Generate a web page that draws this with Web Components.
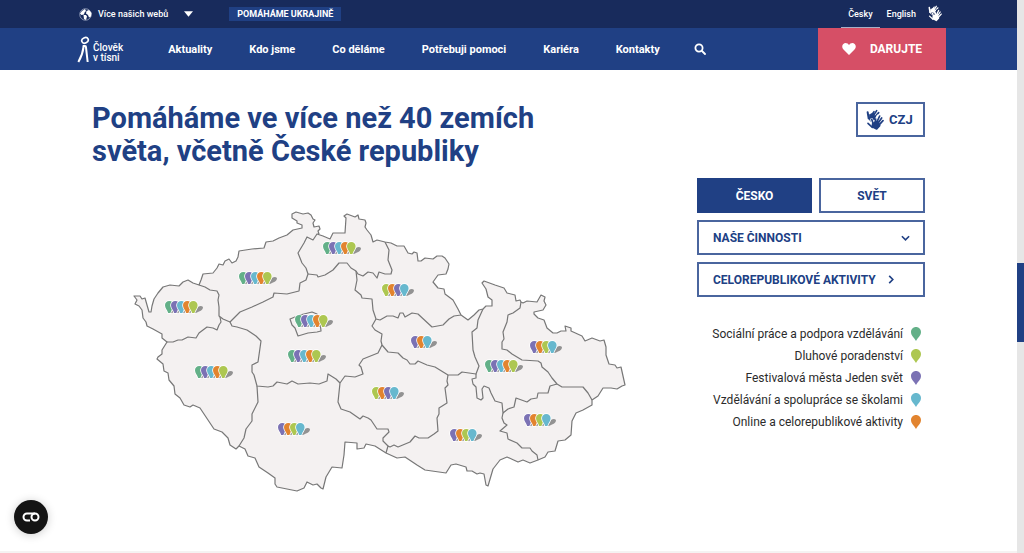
<!DOCTYPE html>
<html lang="cs">
<head>
<meta charset="utf-8">
<title>Člověk v tísni</title>
<style>
:root{--navy:#182b5c;--blue:#204084;--red:#d64f66;--green:#63b088;--lime:#adc751;--violet:#7b72b4;--sky:#67b8ce;--orange:#e2842f}
*{box-sizing:border-box}
body{margin:0;background:#fff;color:#2b2b2b;font-family:Roboto,"Liberation Sans",sans-serif;font-size:12px}
</style>
</head>
<body>
<site-page>
  <top-bar slot="header"></top-bar>
  <main-nav slot="header"></main-nav>
  <help-section></help-section>
  <consent-button slot="overlay"></consent-button>
</site-page>

<script>
const define = (name, html, setup) => {
  const template = document.createElement('template');
  template.innerHTML = '<style>*{box-sizing:border-box}button,select{font:inherit;border:0;margin:0;padding:0;background:none;color:inherit;cursor:pointer}a{color:inherit;text-decoration:none}svg{display:block}</style>' + html;
  customElements.define(name, class extends HTMLElement {
    constructor() {
      super();
      this.attachShadow({ mode: 'open' }).append(template.content.cloneNode(true));
    }
    connectedCallback() { if (setup) setup(this, this.shadowRoot); }
  });
};

const PIN = 'M5 0C2.200 0 0 2.200 0 5C0 8.500 3 10.500 5 14C7 10.500 10 8.500 10 5C10 2.200 7.800 0 5 0Z';

define('site-page', `
<style>
:host{display:grid;grid-template-columns:1fr 7px;min-height:100vh}
.content{display:flex;flex-direction:column;border-bottom:2px solid #f5f2f2}
.rail{background:#e6e6e6;position:relative}
.thumb{position:absolute;top:263px;left:0;right:0;height:79px;background:var(--blue)}
</style>
<div class="content"><header><slot name="header"></slot></header><main><slot></slot></main></div>
<div class="rail"><div class="thumb"></div></div>
<slot name="overlay"></slot>`);

define('hands-icon', `
<style>:host{display:block;width:18px;color:inherit}svg{width:100%}</style>
<svg viewBox="0 0 54 66" fill="none" stroke="currentColor" stroke-linecap="round" stroke-linejoin="round" aria-hidden="true">
<path d="M11 17 23 12 27 30 16 38 8 30Z" fill="currentColor" stroke-width="3"/>
<path d="M5 10 8 28" stroke-width="6"/><path d="M14 22 24 8" stroke-width="5"/><path d="M19 25 32 5" stroke-width="5"/><path d="M23 28 38 11" stroke-width="5"/>
<g stroke="var(--hand-gap,#fff)"><path d="M20 44 35 35 43 50 31 60 18 54Z" fill="var(--hand-gap,#fff)" stroke-width="9"/><path d="M24 45 17 32" stroke-width="9"/><path d="M29 42 36 21" stroke-width="9"/></g>
<path d="M20 44 35 36 41 50 32 60 19 53Z" fill="currentColor" stroke-width="5"/>
<path d="M22 45 17 31" stroke-width="5"/><path d="M27 42 29 30" stroke-width="5"/><path d="M32 40 41 21" stroke-width="5"/><path d="M36 43 47 27" stroke-width="5"/><path d="M38 49 51 35" stroke-width="5"/>
<path d="M6 43 19 55" stroke-width="5"/>
</svg>`);

define('top-bar', `
<style>
:host{display:flex;align-items:center;height:28px;padding:0 75px 0 79px;background:var(--navy);color:#fff;font-size:9px;font-weight:500}
.webs{display:flex;align-items:center;gap:6px}
.webs .arrow{margin-left:10px}
.ukraine{margin-left:36px;padding:0 8px;height:14px;line-height:14px;background:var(--blue);font-weight:700}
nav{display:flex;margin-left:auto;align-items:center}
nav a{line-height:28px;padding:0 7px}
nav a.on{box-shadow:inset 0 -1px #a7afc6}
nav a.sign{padding:0 0 0 5px}
hands-icon{width:14px}
</style>
<button class="webs"><svg width="13" height="13" viewBox="0 0 26 26" aria-hidden="true"><circle cx="13" cy="13" r="11.500" fill="none" stroke="#aeb7cf" stroke-width="1.500"/><path d="M6 6 12 2 14 6 11 9 10 13 5 14 2 11ZM9 14 14 14 16 17 14 24 10 22ZM15 6 20 4 25 10 24 17 20 19 18 14 14 11Z" fill="#fff"/></svg><span>Více našich webů</span><svg class="arrow" width="9" height="6" viewBox="0 0 10 6" aria-hidden="true"><path d="M0 0H10L5 6Z" fill="#fff"/></svg></button>
<a class="ukraine" href="#ukrajina">POMÁHÁME UKRAJINĚ</a>
<nav aria-label="Jazyk"><a class="on" href="#cs">Česky</a><a href="#en">English</a><a class="sign" href="#czj" aria-label="Znakový jazyk"><hands-icon style="--hand-gap:var(--navy)"></hands-icon></a></nav>`);

define('main-nav', `
<style>
:host{display:flex;align-items:center;height:42px;padding:0 71px 0 77px;background:var(--blue);color:#fff;font-size:11px;font-weight:700}
.logo{display:flex;align-items:flex-end;gap:3px;line-height:10px;font-size:10px;font-weight:500;white-space:nowrap}
nav{display:flex;align-items:center;gap:37px;margin-left:45px;white-space:nowrap}
.search{margin-left:34px}
.donate{display:flex;align-items:center;justify-content:center;gap:14px;width:128px;height:42px;margin-left:auto;background:var(--red);font-size:12px}
</style>
<a class="logo" href="#home"><svg width="13" height="27" viewBox="0 0 39 81" fill="none" stroke="#fff" aria-hidden="true"><ellipse cx="24" cy="13" rx="10" ry="8" stroke-width="5" transform="rotate(-25 24 13)"/><path d="M17 30H24Q27 30 27 34L32 78" stroke-width="6"/><path d="M20 31Q17 56 4 78" stroke-width="6"/></svg><span>Člověk<br>v tísni</span></a>
<nav aria-label="Hlavní"><a href="#a">Aktuality</a><a href="#k">Kdo jsme</a><a href="#c">Co děláme</a><a href="#p">Potřebuji pomoci</a><a href="#j">Kariéra</a><a href="#ko">Kontakty</a></nav>
<button class="search" aria-label="Hledat"><svg width="12" height="12" viewBox="0 0 12 12" fill="none" stroke="#fff" stroke-width="1.800" stroke-linecap="round"><circle cx="5" cy="5" r="3.600"/><path d="M8 8 11 11"/></svg></button>
<a class="donate" href="#darujte"><svg width="14" height="12" viewBox="0 0 28 24" aria-hidden="true"><path d="M14 24 3 13C-3 6 3 0 7 0Q12 0 14 4Q16 0 21 0C25 0 31 6 25 13Z" fill="#fff"/></svg><span>DARUJTE</span></a>`);

define('help-section', `
<style>
:host{display:grid;grid-template-columns:minmax(0,1fr) 228px;padding:32px 92px 0}
h1{margin:0;color:var(--blue);font-size:29px;line-height:33px;font-weight:700}
region-map{margin:40px 0 0 38px;max-width:500px}
.side{display:flex;flex-direction:column}
</style>
<div><h1>Pomáháme ve více než 40 zemích<br>světa, včetně České republiky</h1><region-map></region-map></div>
<div class="side"><map-filter></map-filter><map-legend></map-legend></div>`);

define('map-filter', `
<style>
:host{display:grid;gap:7px;color:var(--blue);font-size:12px;font-weight:700}
.box,select{display:flex;align-items:center;height:35px;width:100%;border:2px solid #4a659e;padding:0 14px;font-weight:700;color:var(--blue);appearance:none}
.box.czj{justify-self:end;width:69px;padding:0 8px;gap:5px;margin-bottom:34px;font-size:13px}
.tabs{display:grid;grid-template-columns:115fr 106fr;gap:7px}
.tabs .box{justify-content:center}
.tabs .on{background:var(--blue);color:#fff;border-color:var(--blue)}
.drop{display:grid;align-items:center}
.drop>*{grid-area:1/1}
.drop svg{justify-self:end;margin-right:15px;pointer-events:none}
.link{gap:12px;white-space:nowrap}
</style>
<button class="box czj"><hands-icon></hands-icon>CZJ</button>
<div class="tabs"><button class="box on" aria-pressed="true">ČESKO</button><button class="box" aria-pressed="false">SVĚT</button></div>
<div class="drop"><select aria-label="Naše činnosti"><option>NAŠE ČINNOSTI</option></select><svg width="9" height="6" viewBox="0 0 10 6" fill="none" stroke="#204084" stroke-width="1.800" aria-hidden="true"><path d="M1 1 5 5 9 1"/></svg></div>
<a class="box link" href="#aktivity">CELOREPUBLIKOVÉ AKTIVITY<svg width="6" height="9" viewBox="0 0 6 10" fill="none" stroke="#204084" stroke-width="1.800" aria-hidden="true"><path d="M1 1 5 5 1 9"/></svg></a>`);

define('map-legend', `
<style>
:host{display:block;margin-top:26px}
ul{list-style:none;margin:0;padding:0 4px 0 0}
li{display:flex;justify-content:flex-end;align-items:center;gap:8px;height:22px;font-size:12px;white-space:nowrap}
</style>
<ul></ul>`, (host, root) => {
  root.querySelector('ul').innerHTML = [
    ['Sociální práce a podpora vzdělávání', 'green'],
    ['Dluhové poradenství', 'lime'],
    ['Festivalová města Jeden svět', 'violet'],
    ['Vzdělávání a spolupráce se školami', 'sky'],
    ['Online a celorepublikové aktivity', 'orange']
  ].map(([t, c]) => `<li>${t}<svg width="10" height="14" viewBox="0 0 10 14" aria-hidden="true"><path d="${PIN}" fill="var(--${c})"/></svg></li>`).join('');
});

define('region-map', `
<style>:host{display:block}svg{width:100%}.land{fill:#f4f1f1}.line{fill:none}.land,.line{stroke:#777;stroke-width:1.200;stroke-linejoin:round}</style>
<svg viewBox="130 208 500 288" role="img" aria-label="Mapa krajů České republiky">
<path class="land" d="M134 296 140 296 142 299 145 298 147 305 149 312 151 312 152 306 154 299 158 293 163 287 170 285 179 286 183 282 188 280 193 283 199 285 201 280 203 274 213 273 217 268 219 264 223 265 225 261 229 259 232 263 236 261 238 257 239 251 252 249 264 248 266 242 273 241 279 238 287 235 293 230 302 228 302 225 297 223 297 221 292 218 292 214 296 212 303 214 308 213 311 215 313 219 315 220 313 223 314 227 319 226 320 229 318 231 319 234 317 234 323 236 330 239 333 233 345 233 346 218 344 216 347 214 355 217 358 215 359 219 365 220 366 223 365 227 367 230 371 235 373 242 377 240 385 242 391 243 397 246 404 246 408 253 412 254 414 252 417 253 418 261 421 261 425 258 433 259 437 256 442 256 445 258 449 264 448 269 446 274 438 275 433 282 438 288 444 289 445 294 453 300 458 309 461 315 468 320 474 315 479 310 483 309 486 306 492 306 492 300 488 297 486 289 482 283 484 281 495 285 504 288 507 293 515 295 516 301 520 300 521 302 523 303 527 301 537 302 541 295 545 297 544 301 546 305 543 310 534 312 534 314 538 318 544 320 547 328 553 333 557 333 561 331 566 331 565 326 571 328 571 331 582 336 585 341 592 338 600 341 604 340 606 347 606 355 609 364 615 365 617 368 621 367 625 385 622 386 617 389 611 388 603 388 598 396 592 400 592 405 583 410 576 413 572 421 571 435 565 440 558 441 555 451 548 452 545 457 538 460 530 463 523 460 518 462 507 457 500 460 493 469 488 486 486 485 484 474 480 473 477 474 472 471 467 471 466 467 456 464 451 465 446 473 425 470 417 465 405 457 397 458 386 453 375 446 366 444 364 448 357 449 357 443 345 442 344 455 342 468 332 467 326 477 323 489 321 488 317 484 313 485 307 482 304 488 297 491 287 489 277 487 275 484 275 478 268 473 259 467 255 458 248 456 245 449 239 446 236 449 230 445 228 438 222 432 214 429 208 420 200 408 193 405 190 407 184 405 180 398 175 394 174 386 169 380 168 373 164 371 163 364 157 359 158 357 162 354 162 350 167 342 162 338 162 334 153 329 147 326 146 322 143 318 142 310 139 306 135 304 137 300Z"/>
<path class="line" d="M199 285 205 287 210 290 217 291 219 295 218 300 219 307 219 316 223 319 230 322 235 317 240 312 252 307 263 302 273 297 274 293 287 294 299 291 300 283 306 280 308 274 306 268 302 263 298 253 304 243 307 237 313 240 317 234"/>
<path class="line" d="M308 274 317 275 318 277 325 275 333 270 339 263 347 263 351 268 356 271 358 274 363 276 368 272 373 273 377 278 379 272 385 274 391 274 392 270 388 260 389 250 385 242"/>
<path class="line" d="M356 271 357 280 355 290 361 295 362 298 372 299 373 310 376 319 380 320 387 316 393 316 398 318 400 313 403 313 405 317 412 313 418 314 432 327 443 325 449 319 454 316 461 315"/>
<path class="line" d="M376 319 372 326 375 330 382 334 381 341 382 345 388 352 398 353 403 358 407 360 410 364 415 364 418 361 427 365 435 367 448 375 458 375 462 372 476 374 479 366 475 357 473 350 472 332 477 328 478 320 483 309"/>
<path class="line" d="M521 302 520 308 513 313 508 315 507 322 503 332 504 339 502 342 502 349 507 350 512 354 522 360 538 361 541 363 542 367 548 372 552 378 557 384 562 387 583 387 588 393 592 400"/>
<path class="line" d="M557 384 550 386 548 393 538 393 537 398 531 399 527 402 516 398 514 407 508 409 503 413 502 403 495 401 491 393 489 388 484 386 482 389 483 398 481 400 477 398 476 387 473 384 472 379 476 378 476 374"/>
<path class="line" d="M503 413 502 418 504 423 507 425 500 431 507 433 508 439 517 443 522 448 530 448 532 451 537 455 538 460"/>
<path class="line" d="M448 375 447 381 448 385 445 388 447 403 439 408 439 414 437 418 438 431 434 434 428 438 419 438 415 436 410 442 398 447 394 445 390 447 388 446 386 453"/>
<path class="line" d="M388 446 383 441 383 438 389 432 388 429 377 429 371 420 368 418 363 416 360 419 350 412 341 409 338 402 340 383 345 376 355 377 363 374 361 367 359 365 363 359 378 353 382 345"/>
<path class="line" d="M340 383 336 379 328 374 327 381 319 384 310 383 298 384 292 381 287 384 277 382 273 386 268 387 257 386 254 375 252 372 252 365 258 362 261 341 256 336 247 330 237 327 232 326 230 322"/>
<path class="line" d="M257 386 258 402 252 414 252 421 246 429 244 438 239 446"/>
<path class="line" d="M220 317 221 322 219 325 217 330 213 328 207 327 199 333 196 338 188 337 182 340 178 340 173 342 167 342"/>
<path class="line" d="M290 319 300 315 312 312 317 314 320 322 321 331 317 332 308 333 298 336 295 328 292 325Z"/>
<g class="pins"></g>
</svg>`, (host, root) => {
  const colors = { g: 'green', p: 'violet', b: 'sky', o: 'orange', l: 'lime' };
  const drop = 'M4.300 0C1.800 0 0 1.900 0 4.300C0 7.300 2.200 8.500 3.200 12H5.400C6.400 8.500 8.600 7.300 8.600 4.300C8.600 1.900 6.800 0 4.300 0Z';
  const groups = [[169,301,'gpbol'],[243,272,'gpbol'],[327,242,'gpbol'],[386,284,'lopb'],[299,315,'gpbol'],[415,336,'pob'],[534,341,'polb'],[489,360,'gpbol'],[199,366,'gpbol'],[292,350,'gpbol'],[282,423,'polb'],[376,387,'lopb'],[454,429,'polb'],[528,414,'polb']];
  root.querySelector('.pins').innerHTML = groups.map(([x, y, set]) => [...set].map((k, i) => `
    <g transform="translate(${x + i * 6 - 4} ${y})"><path d="M5 12 9 6Q12 4 14 6Q14 9 10 10.500L7 12Z" fill="#929292"/><path d="${drop}" fill="var(--${colors[k]})" stroke="#fff" stroke-width="1.600" paint-order="stroke"/></g>`).join('')).join('');
});

define('consent-button', `
<style>
:host{position:fixed;left:14px;bottom:19px}
button{display:grid;place-items:center;width:34px;height:34px;border-radius:50%;background:#141414;box-shadow:0 1px 10px #0003}
</style>
<button aria-label="Nastavení cookies"><svg width="18" height="10" viewBox="0 0 18 10" fill="none" stroke="#fff" stroke-width="2"><path d="M8 8.500H5A3.500 3.500 0 0 1 5 1.500H13"/><circle cx="13" cy="5" r="3.500"/></svg></button>`);
</script>
</body>
</html>
